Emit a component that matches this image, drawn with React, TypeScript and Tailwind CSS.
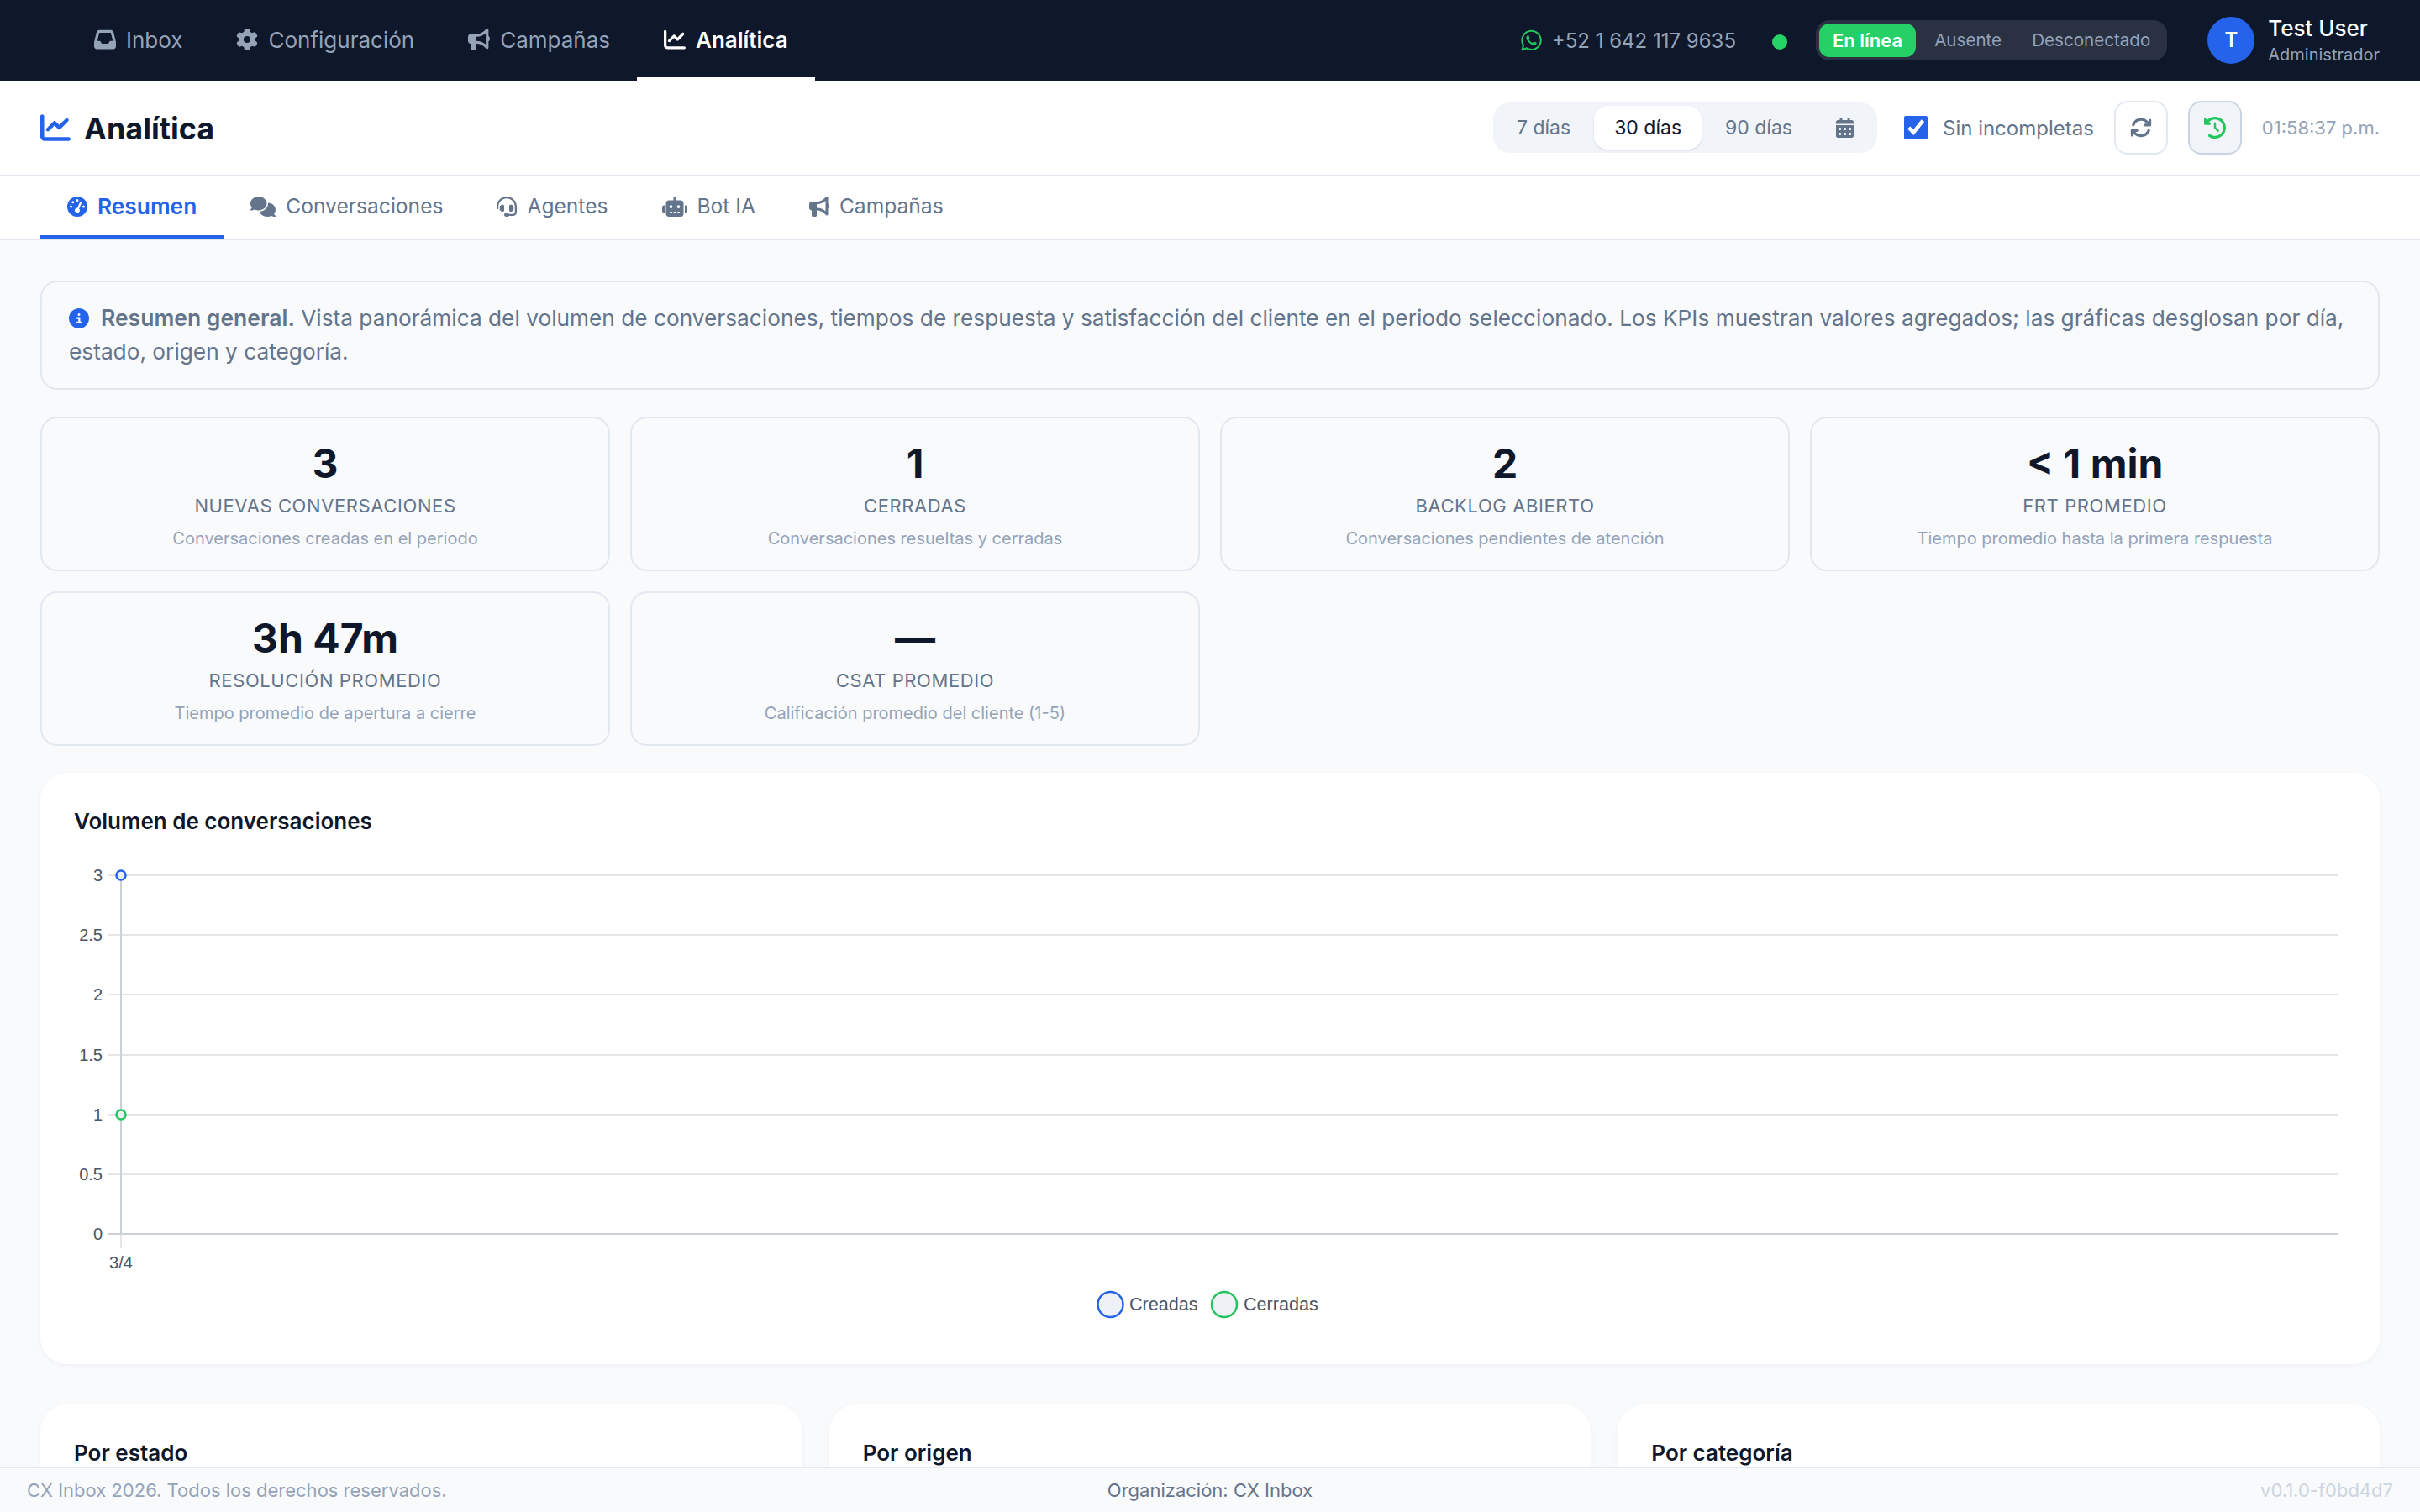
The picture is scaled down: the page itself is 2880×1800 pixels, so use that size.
import {
  FaInbox,
  FaGear,
  FaBullhorn,
  FaChartLine,
  FaWhatsapp,
  FaGaugeHigh,
  FaComments,
  FaHeadset,
  FaRobot,
  FaCalendarDays,
  FaArrowsRotate,
  FaClockRotateLeft,
  FaCircleInfo,
} from "react-icons/fa6";

const navItems = [
  { label: "Inbox", icon: FaInbox },
  { label: "Configuración", icon: FaGear },
  { label: "Campañas", icon: FaBullhorn },
  { label: "Analítica", icon: FaChartLine, active: true },
];

const tabs = [
  { label: "Resumen", icon: FaGaugeHigh, iconSize: "w-[24px]", active: true },
  { label: "Conversaciones", icon: FaComments, iconSize: "w-[30px]" },
  { label: "Agentes", icon: FaHeadset, iconSize: "w-[24px]" },
  { label: "Bot IA", icon: FaRobot, iconSize: "w-[30px]" },
  { label: "Campañas", icon: FaBullhorn, iconSize: "w-[24px]" },
];

const kpis = [
  { value: "3", label: "Nuevas conversaciones", hint: "Conversaciones creadas en el periodo" },
  { value: "1", label: "Cerradas", hint: "Conversaciones resueltas y cerradas" },
  { value: "2", label: "Backlog abierto", hint: "Conversaciones pendientes de atención" },
  { value: "< 1 min", label: "FRT promedio", hint: "Tiempo promedio hasta la primera respuesta" },
  { value: "3h 47m", label: "Resolución promedio", hint: "Tiempo promedio de apertura a cierre" },
  { value: "—", label: "CSAT promedio", hint: "Calificación promedio del cliente (1-5)" },
];

const gridLines = [
  { label: "3", y: 1042 },
  { label: "2.5", y: 1113 },
  { label: "2", y: 1184 },
  { label: "1.5", y: 1256 },
  { label: "1", y: 1327 },
  { label: "0.5", y: 1398 },
];

function VolumeChart() {
  const font = "'Liberation Sans', Arial, sans-serif";
  return (
    <svg className="block w-[2704px] h-[564px]" viewBox="88 1020 2704 564">
      {gridLines.map((g) => (
        <g key={g.label}>
          <line x1="128" x2="2783" y1={g.y} y2={g.y} stroke="#e5e5e5" strokeWidth="2" />
          <text x="122" y={g.y + 7} textAnchor="end" fontSize="20" fill="#4b5563" fontFamily={font}>
            {g.label}
          </text>
        </g>
      ))}
      <line x1="128" x2="2783" y1="1469" y2="1469" stroke="#cbd0d6" strokeWidth="2" />
      <line x1="144" x2="144" y1="1042" y2="1469" stroke="#cbd0d6" strokeWidth="2" />
      <line x1="144" x2="144" y1="1470" y2="1486" stroke="#e5e5e5" strokeWidth="2" />
      <text x="122" y="1476" textAnchor="end" fontSize="20" fill="#4b5563" fontFamily={font}>
        0
      </text>
      <text x="144" y="1510" textAnchor="middle" fontSize="20" fill="#4b5563" fontFamily={font}>
        3/4
      </text>
      <circle cx="144" cy="1042" r="5.5" fill="#eef2f7" stroke="#2563eb" strokeWidth="2.5" />
      <circle cx="144" cy="1327" r="5.5" fill="#eef2f7" stroke="#22c55e" strokeWidth="2.5" />
      <circle cx="1321.5" cy="1553" r="15" fill="#eef2f7" stroke="#2563eb" strokeWidth="2.5" />
      <text x="1344" y="1560" fontSize="21.6" fill="#4b5563" fontFamily={font}>
        Creadas
      </text>
      <circle cx="1457" cy="1553" r="15" fill="#eef2f7" stroke="#22c55e" strokeWidth="2.5" />
      <text x="1480" y="1560" fontSize="21.6" fill="#4b5563" fontFamily={font}>
        Cerradas
      </text>
    </svg>
  );
}

export default function App() {
  return (
    <div className="h-screen flex flex-col overflow-hidden bg-[#f8fafc] font-['Inter',sans-serif]">
      <header className="h-[96px] shrink-0 flex items-stretch justify-between bg-[#0f172a] pl-[80px] pr-[48px]">
        <nav className="flex items-stretch">
          {navItems.map((item) => (
            <a
              key={item.label}
              className={`flex items-center gap-3 px-8 pt-[2px] text-[26px] border-b-4 ${
                item.active
                  ? "text-white font-semibold border-white"
                  : "text-[#94a3b8] border-transparent"
              }`}
            >
              <item.icon className="w-[26px] h-[26px]" />
              <span>{item.label}</span>
            </a>
          ))}
        </nav>
        <div className="flex items-center">
          <FaWhatsapp className="w-[25px] h-[28px] text-[#22c55e] mr-3" />
          <span className="mt-[2px] text-[24px] text-[#94a3b8]">+52 1 642 117 9635</span>
          <span className="w-[18px] h-[18px] rounded-full bg-[#25d366] ml-[43px] mt-1" />
          <div className="flex items-center h-[48px] ml-[34px] px-1 rounded-2xl bg-[#2a3142] text-[20.6px] text-[#94a3b8]">
            <span className="h-[40px] flex items-center px-[16px] rounded-xl bg-[#25d066] text-[22px] text-white font-semibold">
              En línea
            </span>
            <span className="pl-[22px] pr-[18px]">Ausente</span>
            <span className="pl-[18px] pr-[16px]">Desconectado</span>
          </div>
          <div className="w-[56px] h-[56px] ml-[48px] rounded-full bg-[#2563eb] text-white text-[24px] font-semibold flex items-center justify-center">
            T
          </div>
          <div className="ml-[16px] flex flex-col">
            <span className="text-[26px] leading-[34px] font-medium text-white">Test User</span>
            <span className="text-[20px] leading-[28px] text-[#94a3b8]">Administrador</span>
          </div>
        </div>
      </header>

      <div className="h-[114px] shrink-0 flex items-center justify-between bg-white border-b-2 border-[#e2e8f0] px-[48px]">
        <h1 className="flex items-center gap-4 text-[36px] leading-[48px] font-bold text-[#0f172a]">
          <FaChartLine className="w-[36px] h-[36px] text-[#2563eb]" />
          <span className="mt-[2px]">Analítica</span>
        </h1>
        <div className="flex items-center">
          <div className="flex items-center gap-1 h-[60px] px-1 rounded-[20px] bg-[#f1f5f9] text-[23px] text-[#64748b]">
            <span className="px-[24px]">7 días</span>
            <span className="h-[52px] flex items-center px-[24px] rounded-2xl bg-white text-[#0f172a] shadow-sm">
              30 días
            </span>
            <span className="px-[24px]">90 días</span>
            <FaCalendarDays className="w-[21px] h-[24px] mx-[24px]" />
          </div>
          <input
            type="checkbox"
            checked
            readOnly
            className="w-[28px] h-[28px] ml-[32px] accent-[#2563eb]"
          />
          <span className="ml-[18px] mt-[2px] text-[24px] text-[#64748b]">Sin incompletas</span>
          <button className="w-[64px] h-[64px] ml-[24px] flex items-center justify-center rounded-2xl bg-white border-2 border-[#e2e8f0] text-[#64748b]">
            <FaArrowsRotate className="w-[26px] h-[26px]" />
          </button>
          <button className="w-[64px] h-[64px] ml-[24px] flex items-center justify-center rounded-2xl bg-[#f1f5f9] border-2 border-[#cbd5e1] text-[#22c55e]">
            <FaClockRotateLeft className="w-[26px] h-[26px]" />
          </button>
          <span className="ml-[24px] text-[22px] text-[#94a3b8]">01:58:37 p.m.</span>
        </div>
      </div>

      <div className="h-[76px] shrink-0 flex items-stretch bg-white border-b-2 border-[#e2e8f0] px-[48px]">
        {tabs.map((tab) => (
          <a
            key={tab.label}
            className={`flex items-center gap-3 px-8 pt-[1px] border-b-4 ${
              tab.active
                ? "text-[26.3px] text-[#2563eb] font-semibold border-[#2563eb]"
                : "text-[24.6px] text-[#64748b] border-transparent"
            }`}
          >
            <tab.icon className={`h-[24px] ${tab.iconSize}`} />
            <span>{tab.label}</span>
          </a>
        ))}
      </div>

      <main className="flex-1 min-h-0 overflow-hidden px-[48px] pt-[48px]">
        <div className="rounded-[20px] border-2 border-[#e2e8f0] px-[32px] py-[23px] text-[26.25px] leading-[40px] text-[#64748b]">
          <FaCircleInfo className="inline-block w-[24px] h-[24px] mr-[14px] -mt-1 text-[#2563eb]" />
          <strong className="text-[26.5px] leading-none font-semibold">Resumen general.</strong> Vista
          panorámica del volumen de conversaciones, tiempos de respuesta y satisfacción del cliente en el
          periodo seleccionado. Los KPIs muestran valores agregados; las gráficas desglosan por día, estado,
          origen y categoría.
        </div>

        <div className="grid grid-cols-4 gap-[24px] mt-[32px]">
          {kpis.map((kpi) => (
            <div
              key={kpi.label}
              className="h-[184px] rounded-[20px] border-2 border-[#e2e8f0] flex flex-col items-center pt-[24px]"
            >
              <div className="text-[48px] leading-[60px] font-bold text-[#0f172a]">{kpi.value}</div>
              <div className="mt-[2px] text-[22px] leading-[36px] uppercase tracking-[0.6px] text-[#64748b]">
                {kpi.label}
              </div>
              <div className="mt-[5px] text-[20px] leading-[32px] text-[#94a3b8]">{kpi.hint}</div>
            </div>
          ))}
        </div>

        <section className="mt-[32px] rounded-[32px] bg-white shadow-[0_2px_6px_rgba(15,23,42,0.04)] p-[40px]">
          <h2 className="text-[26px] leading-[36px] font-semibold text-[#0f172a] mb-[24px]">
            Volumen de conversaciones
          </h2>
          <VolumeChart />
        </section>

        <div className="grid grid-cols-3 gap-[32px] mt-[48px]">
          {["Por estado", "Por origen", "Por categoría"].map((title) => (
            <section
              key={title}
              className="h-[500px] rounded-[32px] bg-white shadow-[0_2px_6px_rgba(15,23,42,0.04)] p-[40px]"
            >
              <h2 className="text-[26px] leading-[36px] font-semibold text-[#0f172a]">{title}</h2>
            </section>
          ))}
        </div>
      </main>

      <footer className="h-[54px] shrink-0 grid grid-cols-3 items-center bg-[#f8fafc] border-t-2 border-[#e2e8f0] px-[32px] text-[22px]">
        <span className="text-[#94a3b8]">CX Inbox 2026. Todos los derechos reservados.</span>
        <span className="text-center text-[#64748b]">Organización: CX Inbox</span>
        <span className="text-right text-[#cbd5e1]">v0.1.0-f0bd4d7</span>
      </footer>
    </div>
  );
}
